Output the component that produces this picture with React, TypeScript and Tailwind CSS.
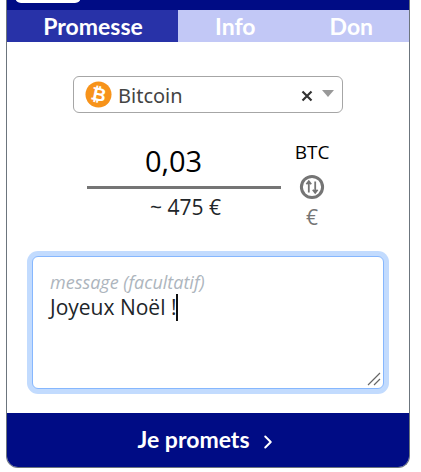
import React from 'react';
import { ChevronRight } from 'lucide-react';

const BitcoinIcon = () => (
  <svg viewBox="0 0 28 28" className="w-[27px] h-[27px] shrink-0">
    <circle cx="14" cy="14" r="13.5" fill="#f7931a" />
    <text x="14" y="20.5" textAnchor="middle" transform="rotate(12 14 14)" fontFamily="'Liberation Sans', sans-serif" fontWeight="700" fontSize="19" fill="#fff">₿</text>
  </svg>
);

const SwapIcon = () => (
  <svg viewBox="0 0 26 26" className="w-[26px] h-[26px]" fill="none" stroke="#757575">
    <circle cx="13" cy="13" r="10.6" strokeWidth="3" />
    <path d="M9.8 18.5V8M7.4 10.2l2.4-3 2.4 3" strokeWidth="1.8" />
    <path d="M16.2 7.5V18M13.8 15.8l2.4 3 2.4-3" strokeWidth="1.8" />
  </svg>
);

const App: React.FC = () => {
  return (
    <div className="w-[421px] h-[472px] bg-white overflow-hidden pl-[6px] pr-[11px] font-['Open_Sans','Noto_Sans',sans-serif]">
      <div className="h-[468px] flex flex-col border-x border-b border-[#6c757d] rounded-b-[12px] overflow-hidden">
        {/* Top band */}
        <div className="h-[10px] bg-[#000c85] relative shrink-0">
          <div className="absolute left-[8px] -top-[4px] w-[66px] h-[7px] bg-white rounded-b-[6px]" />
        </div>

        {/* Tabs */}
        <div className="h-[32px] flex shrink-0 text-white text-[23px] font-bold font-['Lato',sans-serif]">
          <div className="w-[171px] bg-[#2832a8] flex items-center justify-center pl-[1px] pt-[1px]">Promesse</div>
          <div className="flex-1 bg-[#c2c8f6] flex items-center pt-[1px]">
            <span className="ml-[37px]">Info</span>
            <span className="ml-[74px]">Don</span>
          </div>
        </div>

        <div className="flex-1 flex flex-col">
          {/* Currency select */}
          <div className="flex justify-center pt-[34px]">
            <div className="w-[270px] h-[37px] border border-[#a6a6a6] rounded-[6px] flex items-center pl-[11px] pr-[8px]">
              <BitcoinIcon />
              <span className="ml-[6px] text-[20px] text-[#444] font-['Noto_Sans',sans-serif] leading-none mt-[2px]">Bitcoin</span>
              <svg viewBox="0 0 12 12" className="ml-auto w-[12px] h-[12px] mt-[2px]" stroke="#333" strokeWidth="2.2">
                <path d="M1.5 1.5l9 9M10.5 1.5l-9 9" />
              </svg>
              <div className="ml-[9px] mb-[3px] w-0 h-0 border-x-[6px] border-x-transparent border-t-[7px] border-t-[#999]" />
            </div>
          </div>

          {/* Amount */}
          <div className="flex mt-[19px] pl-[80px]">
            <div className="w-[194px] flex flex-col items-center">
              <div className="w-full h-[57px] border-b-[3px] border-[#757575] text-center text-[29px] leading-[58px] text-black pr-[21px]">0,03</div>
              <div className="text-[21px] leading-[26px] text-[#212529] pl-[3px] mt-[5px]">~ 475 €</div>
            </div>
            <div className="w-[62px] flex flex-col items-center pt-[7px]">
              <div className="text-[19px] leading-[26px] text-black">BTC</div>
              <div className="mt-[9px] h-[26px]"><SwapIcon /></div>
              <div className="text-[21px] leading-[26px] text-[#757575] mt-[4px]">€</div>
            </div>
          </div>

          {/* Message */}
          <div className="mt-[26px] mx-[25px] relative h-[133px] bg-white border border-[#86b7fe] rounded-[6px] shadow-[0_0_0_5px_#c2dbfe] pl-[17px] pt-[13px]">
            <div className="text-[18px] leading-[24px] italic text-[#adb5bd]">message (facultatif)</div>
            <div className="text-[21px] leading-[27px] text-[#212529] flex items-center">
              Joyeux Noël !<span className="inline-block w-[2px] h-[27px] bg-[#111]" />
            </div>
            <svg viewBox="0 0 14 14" className="absolute right-[2px] bottom-[2px] w-[14px] h-[14px]" stroke="#666" strokeWidth="1.2">
              <path d="M1 13L13 1M7 13l6-6" />
            </svg>
          </div>

          {/* Submit */}
          <div className="mt-auto h-[54px] bg-[#000c85] flex items-center justify-center text-white text-[23px] font-bold font-['Lato',sans-serif] gap-[7px] pb-[1px]">
            Je promets
            <ChevronRight className="w-[22px] h-[22px] mt-[4px]" strokeWidth={2.2} />
          </div>
        </div>
      </div>
    </div>
  );
};

export default App;
